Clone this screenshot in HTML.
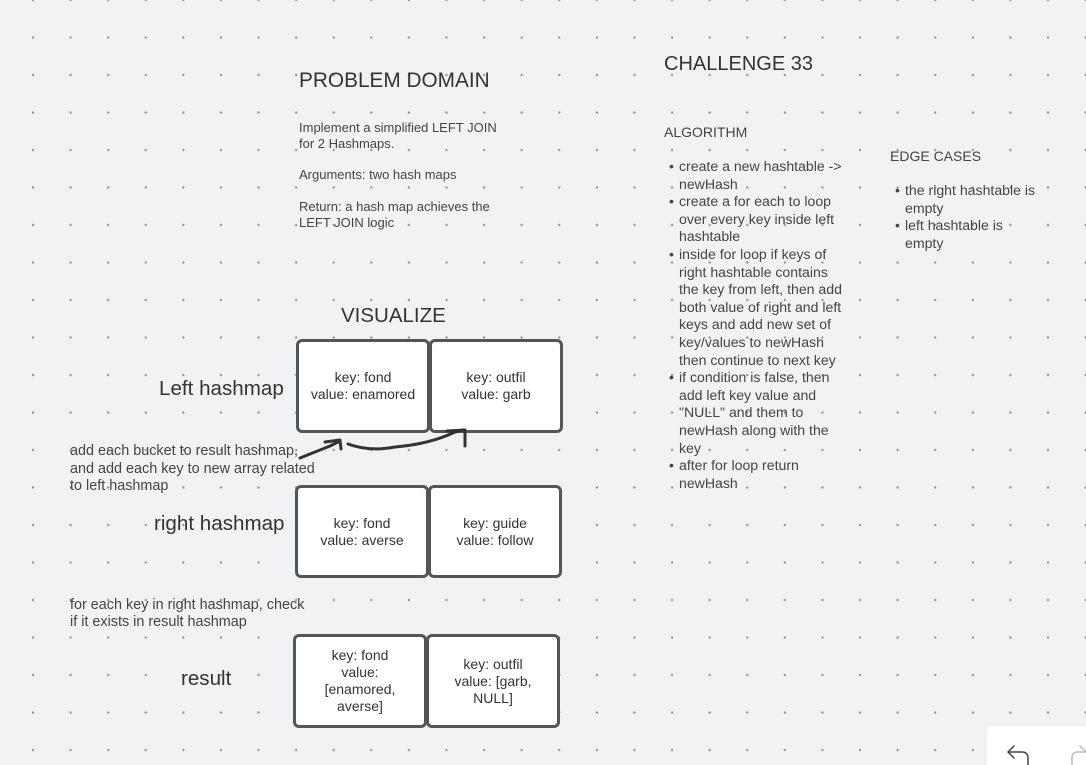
<!DOCTYPE html>
<html><head><meta charset="utf-8"><style>
html,body{margin:0;padding:0;width:1086px;height:765px;overflow:hidden}
body{position:relative;background-color:#f1f2f4;
background-image:radial-gradient(circle,#8a8a8a 0.9px,transparent 1.3px);
background-size:37.6px 37.5px;background-position:14.2px -18.75px;
font-family:"Liberation Sans",sans-serif;color:#333}
.t{position:absolute;white-space:nowrap}
.s{font-size:13px;line-height:16px;color:#444}
.box{position:absolute;background:#fff;border:3px solid #555;border-radius:6px;box-sizing:border-box;display:flex;align-items:center;justify-content:center;text-align:center;font-size:14px;line-height:17px;color:#333}
ul{margin:0;padding:0;list-style:none}
li{position:relative;padding-left:15px}
li:before{content:"•";position:absolute;left:5px}
.l{font-size:14.1px;line-height:17.6px;color:#444}
</style></head><body>
<div class="t" style="left:299px;top:69px;font-size:20.8px">PROBLEM DOMAIN</div>
<div class="t s" style="left:299px;top:120px">Implement a simplified LEFT JOIN<br>for 2 Hashmaps.</div>
<div class="t s" style="left:299px;top:167px">Arguments: two hash maps</div>
<div class="t s" style="left:299px;top:199px">Return: a hash map achieves the<br>LEFT JOIN logic</div>
<div class="t" style="left:341px;top:304px;font-size:20.5px">VISUALIZE</div>
<div class="t" style="left:664px;top:53px;font-size:20px">CHALLENGE 33</div>
<div class="t" style="left:664px;top:124px;font-size:14px;color:#444">ALGORITHM</div>
<div class="t" style="left:890px;top:148px;font-size:14px;color:#444">EDGE CASES</div>
<ul class="t l" style="left:664px;top:158px">
<li>create a new hashtable -&gt;<br>newHash</li>
<li>create a for each to loop<br>over every key inside left<br>hashtable</li>
<li>inside for loop if keys of<br>right hashtable contains<br>the key from left, then add<br>both value of right and left<br>keys and add new set of<br>key/values to newHash<br>then continue to next key</li>
<li>if condition is false, then<br>add left key value and<br>"NULL" and them to<br>newHash along with the<br>key</li>
<li>after for loop return<br>newHash</li>
</ul>
<ul class="t l" style="left:890px;top:182px">
<li>the right hashtable is<br>empty</li>
<li>left hashtable is<br>empty</li>
</ul>
<div class="t" style="left:159px;top:377px;font-size:20.6px">Left hashmap</div>
<div class="t" style="left:154px;top:512px;font-size:20.6px">right hashmap</div>
<div class="t" style="left:181px;top:667px;font-size:20.6px">result</div>
<div class="t" style="left:70px;top:443px;font-size:14.4px;line-height:17.5px;color:#444">add each bucket to result hashmap,<br>and add each key to new array related<br>to left hashmap</div>
<div class="t" style="left:70px;top:597px;font-size:14.4px;line-height:17px;color:#444">for each key in right hashmap, check<br>if it exists in result hashmap</div>
<div class="box" style="left:296px;top:339px;width:134px;height:94px">key: fond<br>value: enamored</div>
<div class="box" style="left:429px;top:339px;width:134px;height:94px">key: outfil<br>value: garb</div>
<div class="box" style="left:295px;top:485px;width:134px;height:93px">key: fond<br>value: averse</div>
<div class="box" style="left:428px;top:485px;width:134px;height:93px">key: guide<br>value: follow</div>
<div class="box" style="left:293px;top:634px;width:134px;height:94px">key: fond<br>value:<br>[enamored,<br>averse]</div>
<div class="box" style="left:426px;top:634px;width:134px;height:94px">key: outfil<br>value: [garb,<br>NULL]</div>
<svg style="position:absolute;left:0;top:0" width="1086" height="765">
<g fill="none" stroke="#333" stroke-width="3" stroke-linecap="round" stroke-linejoin="round">
<path d="M300 458 Q315 452 330 446 L340 441"/>
<path d="M325 442 L340 440 L341 449"/>
<path d="M348 444 Q370 452 395 447 Q430 444 455 432 L463 430"/>
<path d="M447 431 L465 430 L465 446"/>
</g>
</svg>
<div style="position:absolute;left:987px;top:726px;width:110px;height:50px;background:#fff;border-radius:4px"></div>
<svg style="position:absolute;left:1000px;top:740px" width="86" height="25">
<g fill="none" stroke="#444" stroke-width="1.5" stroke-linecap="round">
<path d="M8 12 L14 6 M8 12 L14 18 M8 12 L22 12 Q28 12 28 18 L28 25"/>
</g>
<g fill="none" stroke="#bbb" stroke-width="1.5" stroke-linecap="round">
<path d="M86 12 L78 12 Q72 12 72 18 L72 25 M80 6 L86 12"/>
</g>
</svg>
</body></html>
